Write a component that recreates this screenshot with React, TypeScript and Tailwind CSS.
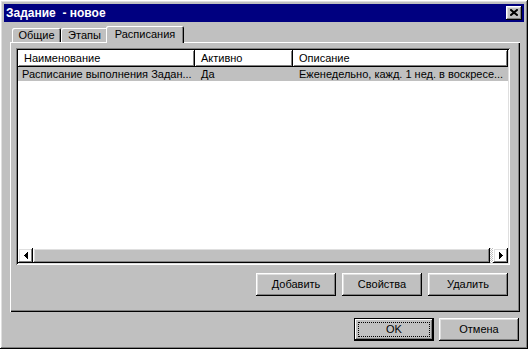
import React from "react";

const raised =
  "shadow-[inset_-1px_-1px_0_#000,inset_1px_1px_0_#fff,inset_-2px_-2px_0_#808080,inset_2px_2px_0_#dfdfdf]";
const raisedThin =
  "shadow-[inset_-1px_-1px_0_#000,inset_1px_1px_0_#fff,inset_-2px_-2px_0_#808080]";
const sunken =
  "shadow-[inset_1px_1px_0_#808080,inset_-1px_-1px_0_#fff,inset_2px_2px_0_#000,inset_-2px_-2px_0_#dfdfdf]";

function Tab({ label, active, width }: { label: string; active?: boolean; width: number }) {
  if (active) {
    return (
      <div
        style={{ width }}
        className="relative z-10 -mx-[2px] -mb-[1px] h-[17px] rounded-t-[2px] bg-[#c0c0c0] pt-[2px] text-center shadow-[inset_1px_1px_0_#fff,inset_-1px_0_0_#000,inset_-2px_0_0_#808080]"
      >
        {label}
      </div>
    );
  }
  return (
    <div
      style={{ width }}
      className="h-[14px] rounded-t-[2px] bg-[#c0c0c0] pt-[1px] text-center shadow-[inset_1px_1px_0_#fff,inset_-1px_0_0_#000,inset_-2px_0_0_#808080]"
    >
      {label}
    </div>
  );
}

function Button({ label, isDefault }: { label: string; isDefault?: boolean }) {
  if (isDefault) {
    return (
      <div className="relative h-[23px] w-[80px] border border-black">
        <div className={`flex h-full w-full items-center justify-center ${raisedThin}`}>{label}</div>
        <div className="absolute inset-[3px] border border-dotted border-black" />
      </div>
    );
  }
  return (
    <div className={`flex h-[23px] w-[80px] items-center justify-center ${raised}`}>{label}</div>
  );
}

function Arrow({ dir }: { dir: "left" | "right" }) {
  return (
    <div className={`flex h-full w-[15px] items-center justify-center ${raised}`}>
      <svg width="4" height="7" viewBox="0 0 4 7" shapeRendering="crispEdges">
        {dir === "left" ? (
          <path d="M0 3.5 L4 0 L4 7 Z" fill="#000" />
        ) : (
          <path d="M4 3.5 L0 0 L0 7 Z" fill="#000" />
        )}
      </svg>
    </div>
  );
}

export default function App() {
  return (
    <div
      className={`flex h-[349px] w-[528px] flex-col bg-[#c0c0c0] p-[4px] font-['Liberation_Sans',Arial,sans-serif] text-[11px] leading-[13px] text-black ${raised}`}
    >
      {/* title bar */}
      <div className="flex h-[18px] items-center bg-[#000080] pl-[2px] pr-[2px]">
        <span className="whitespace-pre text-[12px] font-bold text-white">Задание  - новое</span>
        <div className={`relative ml-auto h-[14px] w-[16px] bg-[#c0c0c0] ${raised}`}>
          <svg
            className="absolute left-[4px] top-[3px] block"
            width="8"
            height="7"
            viewBox="0 0 8 7"
          >
            <path d="M1 1 L7 6 M7 1 L1 6" stroke="#000000" strokeWidth="2" strokeLinecap="square" fill="none" />
          </svg>
        </div>
      </div>

      <div className="flex flex-1 flex-col pl-[6px] pr-[4px]">
        {/* tabs */}
        <div className="flex h-[20px] items-end pl-[2px]">
          <Tab label="Общие" width={49} />
          <Tab label="Этапы" width={47} />
          <Tab label="Расписания" width={78} active />
        </div>

        {/* panel */}
        <div className="flex h-[270px] flex-col pl-[6px] pr-[10px] pt-[6px] shadow-[inset_1px_1px_0_#fff,inset_-1px_-1px_0_#000,inset_-2px_-2px_0_#808080]">
          <div className={`flex h-[217px] flex-col bg-white p-[2px] ${sunken}`}>
            <div className="flex h-[17px]">
              <div className={`flex w-[177px] items-center pl-[6px] ${raisedThin}`}>Наименование</div>
              <div className={`flex w-[98px] items-center pl-[6px] ${raisedThin}`}>Активно</div>
              <div className={`flex flex-1 items-center pl-[6px] ${raisedThin}`}>Описание</div>
            </div>
            <div className="flex h-[14px] items-center bg-[#c0c0c0] pl-[1px]">
              <div className="w-[176px] truncate pl-[3px]">Расписание выполнения Задан...</div>
              <div className="w-[98px] pl-[6px]">Да</div>
              <div className="flex-1 pl-[6px]">Еженедельно, кажд. 1 нед. в воскресе...</div>
            </div>
            <div className="flex-1" />
            <div className="flex h-[15px]">
              <Arrow dir="left" />
              <div className={`flex-1 bg-[#c0c0c0] ${raised}`} />
              <div className="w-[3px] bg-[repeating-conic-gradient(#fff_0_25%,#c0c0c0_0_50%)] bg-[length:2px_2px]" />
              <Arrow dir="right" />
            </div>
          </div>

          <div className="mt-[8px] flex justify-end gap-[6px] pr-[2px]">
            <Button label="Добавить" />
            <Button label="Свойства" />
            <Button label="Удалить" />
          </div>
        </div>

        {/* footer */}
        <div className="mt-[6px] flex justify-end gap-[5px] pr-[1px]">
          <Button label="OK" isDefault />
          <Button label="Отмена" />
        </div>
      </div>
    </div>
  );
}
